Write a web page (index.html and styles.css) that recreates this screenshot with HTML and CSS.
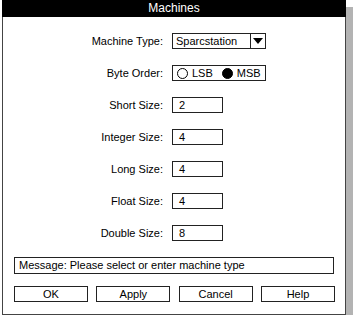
FILE: index.html
```html
<!DOCTYPE html>
<html lang="en">
<head>
  <meta charset="UTF-8">
  <title>Machines</title>
  <link rel="stylesheet" href="styles.css">
</head>
<body>
  <div class="window">
    <div class="titlebar">Machines</div>
    <div class="form">
      <label class="lbl">Machine Type:</label>
      <div class="dropdown">
        <span class="dd-value">Sparcstation</span>
        <span class="dd-arrow"><span class="tri"></span></span>
      </div>

      <label class="lbl">Byte Order:</label>
      <div class="radios">
        <span class="radio"><span class="dot"></span>LSB</span>
        <span class="radio"><span class="dot on"></span>MSB</span>
      </div>

      <label class="lbl">Short Size:</label>
      <div class="field">2</div>

      <label class="lbl">Integer Size:</label>
      <div class="field">4</div>

      <label class="lbl">Long Size:</label>
      <div class="field">4</div>

      <label class="lbl">Float Size:</label>
      <div class="field">4</div>

      <label class="lbl">Double Size:</label>
      <div class="field">8</div>
    </div>

    <div class="message">Message: Please select or enter machine type</div>

    <div class="buttons">
      <button>OK</button>
      <button>Apply</button>
      <button>Cancel</button>
      <button>Help</button>
    </div>
  </div>
</body>
</html>
```

FILE: styles.css
```css
body { margin: 0; background: #fff; font-family: "Liberation Sans", Arial, sans-serif; font-size: 11px; color: #000; }

.window {
  margin-left: 2px; width: 342px; height: 314px;
  border: 1px solid #444; border-top: 0; background: #fff;
  box-shadow: 7px 7px 0 #b3b3b3;
}
.titlebar { height: 17px; line-height: 17px; background: #000; color: #fff; text-align: center; font-size: 12px; margin: 0 -1px; }

.form {
  display: grid; grid-template-columns: 160px auto; grid-auto-rows: 16px;
  column-gap: 9px; row-gap: 16px; padding-top: 16px; align-items: center;
}
.lbl { text-align: right; line-height: 16px; }

.dropdown { display: flex; width: 94px; height: 16px; border: 1px solid #222; box-sizing: border-box; }
.dd-value { flex: 1; padding-left: 3px; line-height: 14px; }
.dd-arrow { width: 14px; border-left: 1px solid #222; display: flex; align-items: center; justify-content: center; }
.tri { width: 0; height: 0; border-left: 5px solid transparent; border-right: 5px solid transparent; border-top: 6px solid #000; }

.radios { display: flex; gap: 9px; width: 94px; height: 16px; border: 1px solid #222; box-sizing: border-box; padding-left: 4px; align-items: center; }
.radio { display: flex; align-items: center; gap: 4px; }
.dot { width: 11px; height: 11px; border: 1px solid #000; border-radius: 50%; box-sizing: border-box; }
.dot.on { background: #000; }

.field { width: 51px; height: 16px; border: 1px solid #222; box-sizing: border-box; padding-left: 6px; line-height: 14px; }

.message {
  margin: 16px 11px 0 11px; height: 17px; border: 1px solid #222; box-sizing: border-box;
  padding-left: 4px; line-height: 15px;
}

.buttons { display: flex; justify-content: space-between; margin: 12px 10px 0 11px; }
.buttons button {
  width: 74px; height: 16px; padding: 0; background: #fff; border: 1px solid #222;
  font: inherit; color: #000; line-height: 14px;
}
```
